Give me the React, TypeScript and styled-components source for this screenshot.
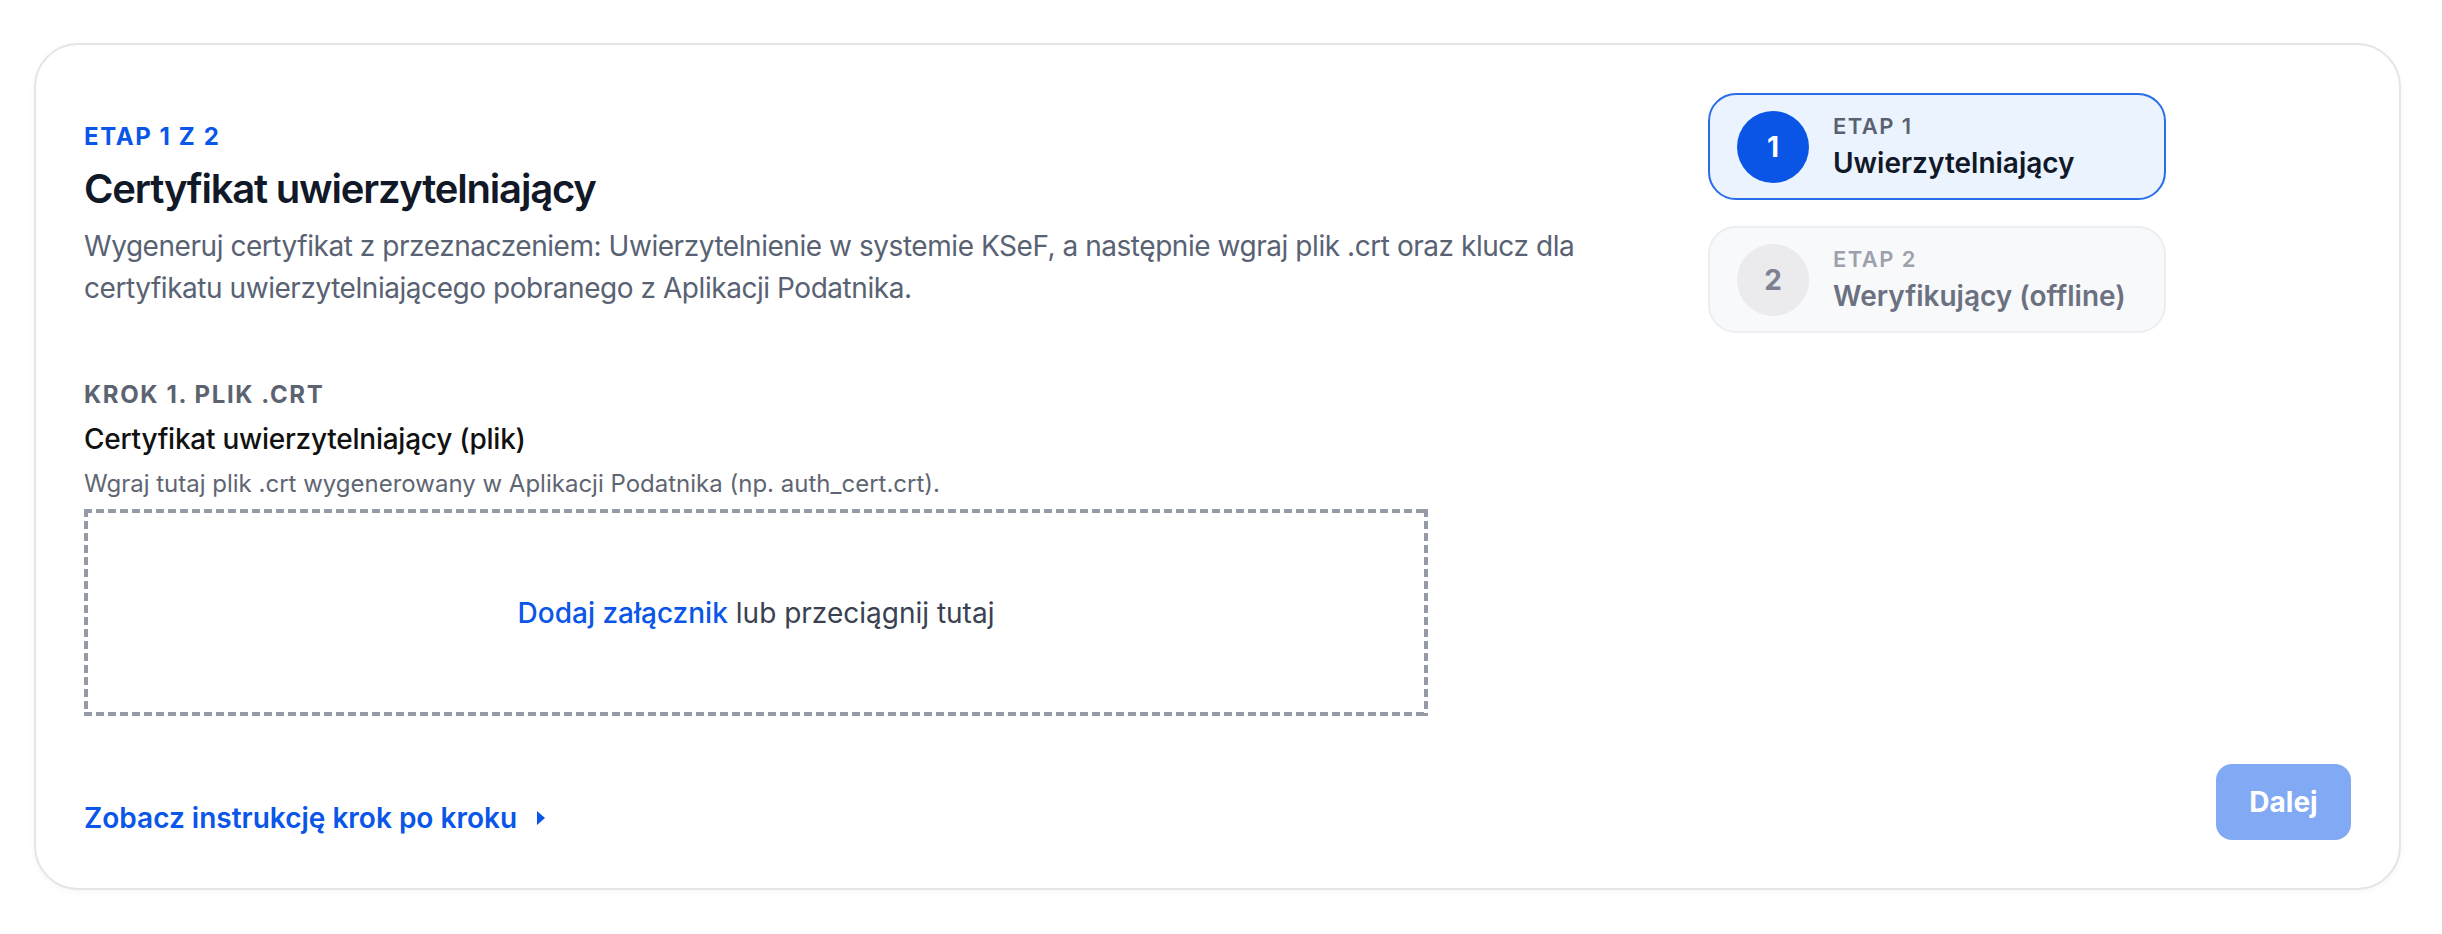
import styled, { createGlobalStyle } from "styled-components";

const GlobalStyle = createGlobalStyle`
  html, body {
    margin: 0;
    padding: 0;
    background: #ffffff;
  }
  body {
    font-family: Inter, "Noto Sans", "Liberation Sans", sans-serif;
    -webkit-font-smoothing: antialiased;
  }
`;

const Page = styled.div`
  padding: 43px 41px 40px 34px;
`;

const Card = styled.section`
  box-sizing: border-box;
  width: 2367px;
  padding: 48px;
  border: 2px solid #e4e4e9;
  border-radius: 44px;
  background: #fff;
  box-shadow: 0 2px 6px rgba(17, 24, 39, 0.04);
  display: flex;
  flex-direction: column;
  gap: 48px;
`;

const TopRow = styled.div`
  display: grid;
  grid-template-columns: 1fr 643px;
  column-gap: 48px;
`;

const Main = styled.div`
  padding-top: 28px;
  display: flex;
  flex-direction: column;
`;

const Eyebrow = styled.div`
  font-size: 24px;
  line-height: 32px;
  font-weight: 700;
  letter-spacing: 1.6px;
  color: #0a56e8;
  text-transform: uppercase;
`;

const Title = styled.h1`
  margin: 8px 0 0;
  font-size: 40px;
  line-height: 56px;
  font-weight: 600;
  letter-spacing: -1.2px;
  color: #111827;
`;

const Description = styled.p`
  margin: 8px 0 0;
  max-width: 1576px;
  font-size: 28px;
  line-height: 42px;
  letter-spacing: -0.45px;
  color: #596273;
`;

const StepLabel = styled.div`
  margin-top: 70px;
  font-size: 24px;
  line-height: 32px;
  font-weight: 700;
  letter-spacing: 1.6px;
  color: #5c6370;
  text-transform: uppercase;
`;

const FieldLabel = styled.div`
  margin-top: 8px;
  font-size: 28px;
  line-height: 40px;
  font-weight: 500;
  letter-spacing: -0.25px;
  color: #111111;
`;

const FieldHint = styled.div`
  margin-top: 9px;
  font-size: 24px;
  line-height: 32px;
  color: #5f6673;
`;

const dash = "#959ba6";

const DropZone = styled.div`
  box-sizing: border-box;
  margin-top: 9px;
  width: 1344px;
  height: 207px;
  background:
    repeating-linear-gradient(90deg, ${dash} 0 8px, transparent 8px 12px) top left / 100% 4px no-repeat,
    repeating-linear-gradient(90deg, ${dash} 0 8px, transparent 8px 12px) bottom left / 100% 4px no-repeat,
    repeating-linear-gradient(180deg, ${dash} 0 8px, transparent 8px 12px) top left / 4px 100% no-repeat,
    repeating-linear-gradient(180deg, ${dash} 0 8px, transparent 8px 12px) top right / 4px 100% no-repeat;
  display: flex;
  align-items: center;
  justify-content: center;
  font-size: 28px;
  line-height: 40px;
  color: #3a4150;
`;

const DropLink = styled.span`
  color: #0a56e8;
  font-weight: 500;
  margin-right: 8px;
`;

const Stepper = styled.div`
  display: flex;
  flex-direction: column;
  gap: 26px;
`;

const StepCard = styled.div<{ $active?: boolean }>`
  box-sizing: border-box;
  width: 458px;
  height: 107px;
  padding: 0 27px;
  display: flex;
  align-items: center;
  gap: 24px;
  border-radius: 28px;
  border: 2px solid ${(p) => (p.$active ? "#2a6de8" : "#eceef2")};
  background: ${(p) => (p.$active ? "#ebf3fe" : "#f8f9fb")};
`;

const StepCircle = styled.div<{ $active?: boolean }>`
  width: 72px;
  height: 72px;
  border-radius: 50%;
  flex-shrink: 0;
  display: flex;
  align-items: center;
  justify-content: center;
  font-size: 28px;
  font-weight: 700;
  background: ${(p) => (p.$active ? "#0a55e6" : "#ebebee")};
  color: ${(p) => (p.$active ? "#ffffff" : "#7c8291")};
`;

const StepText = styled.div`
  display: flex;
  flex-direction: column;
  gap: 4px;
`;

const StepKicker = styled.div<{ $active?: boolean }>`
  font-size: 22px;
  line-height: 28px;
  font-weight: 600;
  letter-spacing: 1.4px;
  color: ${(p) => (p.$active ? "#5a6170" : "#9ca1ab")};
`;

const StepName = styled.div<{ $active?: boolean }>`
  font-size: 28px;
  line-height: 38px;
  font-weight: 600;
  color: ${(p) => (p.$active ? "#111827" : "#6b7180")};
`;

const Footer = styled.div`
  display: flex;
  justify-content: space-between;
  align-items: flex-end;
`;

const GuideLink = styled.a`
  display: inline-flex;
  align-items: center;
  gap: 20px;
  margin-bottom: 2px;
  font-size: 28px;
  line-height: 40px;
  font-weight: 600;
  color: #0a56e8;
  text-decoration: none;
  cursor: pointer;
`;

const NextButton = styled.button`
  width: 135px;
  height: 76px;
  border: none;
  border-radius: 16px;
  background: #82a9f3;
  color: #ffffff;
  font-family: inherit;
  font-size: 28px;
  font-weight: 700;
  cursor: not-allowed;
`;

const steps = [
  { n: 1, kicker: "ETAP 1", name: "Uwierzytelniający", active: true },
  { n: 2, kicker: "ETAP 2", name: "Weryfikujący (offline)", active: false },
];

export default function App() {
  return (
    <Page>
      <GlobalStyle />
      <Card>
        <TopRow>
          <Main>
            <Eyebrow>Etap 1 z 2</Eyebrow>
            <Title>Certyfikat uwierzytelniający</Title>
            <Description>
              Wygeneruj certyfikat z przeznaczeniem: Uwierzytelnienie w systemie KSeF, a
              następnie wgraj plik .crt oraz klucz dla certyfikatu uwierzytelniającego
              pobranego z Aplikacji Podatnika.
            </Description>
            <StepLabel>Krok 1. Plik .crt</StepLabel>
            <FieldLabel>Certyfikat uwierzytelniający (plik)</FieldLabel>
            <FieldHint>
              Wgraj tutaj plik .crt wygenerowany w Aplikacji Podatnika (np. auth_cert.crt).
            </FieldHint>
            <DropZone>
              <DropLink>Dodaj załącznik</DropLink> lub przeciągnij tutaj
            </DropZone>
          </Main>
          <Stepper>
            {steps.map((s) => (
              <StepCard key={s.n} $active={s.active}>
                <StepCircle $active={s.active}>{s.n}</StepCircle>
                <StepText>
                  <StepKicker $active={s.active}>{s.kicker}</StepKicker>
                  <StepName $active={s.active}>{s.name}</StepName>
                </StepText>
              </StepCard>
            ))}
          </Stepper>
        </TopRow>
        <Footer>
          <GuideLink>
            Zobacz instrukcję krok po kroku
            <svg width="8" height="14" viewBox="0 0 8 14">
              <polygon points="0,0 8,7 0,14" fill="#0a56e8" />
            </svg>
          </GuideLink>
          <NextButton disabled>Dalej</NextButton>
        </Footer>
      </Card>
    </Page>
  );
}
